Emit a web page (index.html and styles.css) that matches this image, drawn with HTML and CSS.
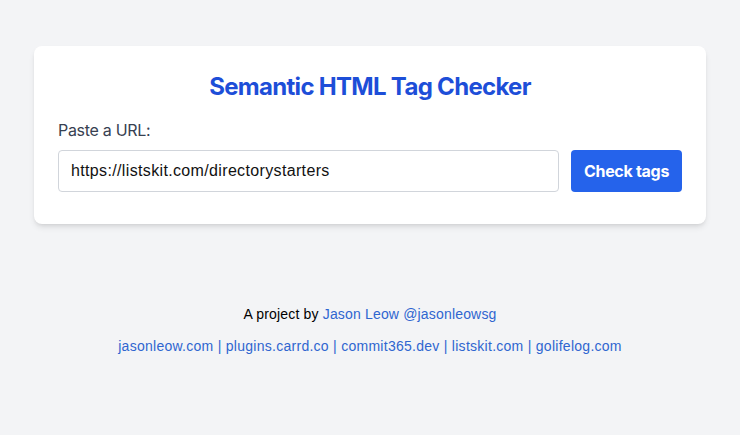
FILE: index.html
```html
<!DOCTYPE html>
<html lang="en">
<head>
<meta charset="utf-8">
<title>Semantic HTML Tag Checker</title>
<link rel="stylesheet" href="styles.css">
</head>
<body>
<main class="page">
  <section class="card">
    <h1 class="title">Semantic HTML Tag Checker</h1>
    <label class="label" for="url">Paste a URL:</label>
    <form class="row">
      <input id="url" class="input" type="text" value="https://listskit.com/directorystarters">
      <button class="button" type="button">Check tags</button>
    </form>
  </section>
  <footer class="footer">
    <p class="credit">A project by <a href="#">Jason Leow @jasonleowsg</a></p>
    <p class="links"><a href="#">jasonleow.com</a> | <a href="#">plugins.carrd.co</a> | <a href="#">commit365.dev</a> | <a href="#">listskit.com</a> | <a href="#">golifelog.com</a></p>
  </footer>
</main>
</body>
</html>
```

FILE: styles.css
```css
* { box-sizing: border-box; }
html, body { margin: 0; padding: 0; }
body {
  background: #f3f4f6;
  font-family: Inter, "Liberation Sans", sans-serif;
  color: #111827;
}
.page {
  padding-top: 46px;
  display: flex;
  flex-direction: column;
  align-items: center;
}
.card {
  width: 672px;
  background: #fff;
  border-radius: 8px;
  box-shadow: 0 4px 6px -1px rgba(0,0,0,0.1), 0 2px 4px -2px rgba(0,0,0,0.1);
  padding: 24px 24px 32px;
}
.title {
  margin: 0 0 16px;
  padding-top: 1px;
  text-align: center;
  font-size: 24px;
  line-height: 32px;
  font-weight: 700;
  color: #1d4ed8;
  letter-spacing: -0.7px;
}
.label {
  display: block;
  margin-top: -1px;
  font-size: 16px;
  line-height: 24px;
  color: #374151;
  letter-spacing: -0.3px;
  margin-bottom: 8px;
}
.row {
  display: flex;
  gap: 12px;
  margin: 0;
}
.input {
  flex: 1;
  height: 42px;
  border: 1px solid #d1d5db;
  border-radius: 4px;
  padding: 8px 12px;
  font-family: "Liberation Sans", Arial, sans-serif;
  font-size: 16px;
  letter-spacing: 0.35px;
  color: #111;
  background: #fff;
  outline: none;
}
.button {
  height: 42px;
  width: 111px;
  background: #2563eb;
  color: #fff;
  border: none;
  border-radius: 4px;
  font-family: Inter, "Liberation Sans", sans-serif;
  font-weight: 700;
  font-size: 16px;
  letter-spacing: -0.3px;
  padding: 0;
}
.footer {
  margin-top: 80px;
  text-align: center;
  font-family: "Liberation Sans", Arial, sans-serif;
  font-size: 14px;
  line-height: 20px;
  color: #000;
}
.footer p { margin: 0; }
.credit { margin-bottom: 12px !important; letter-spacing: 0.17px; }
.footer a { color: #2f66d0; text-decoration: none; }
.links { color: #2f66d0; letter-spacing: 0.27px; }
```
